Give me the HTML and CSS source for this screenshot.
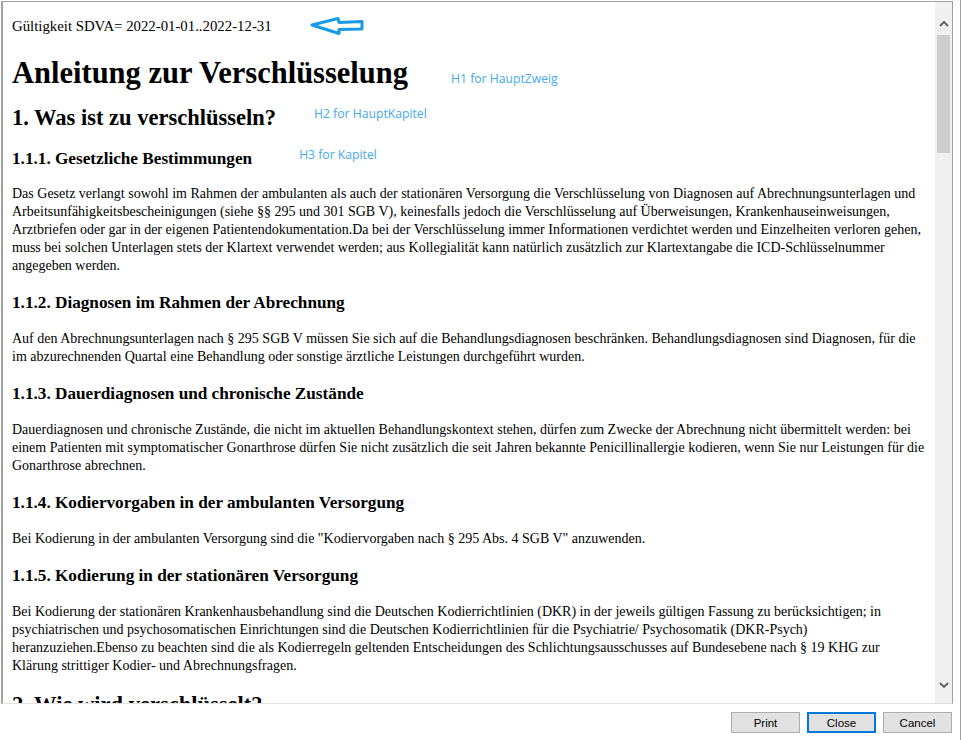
FILE: index.html
```html
<!DOCTYPE html>
<html lang="de">
<head>
<meta charset="utf-8">
<title>Anleitung zur Verschlüsselung</title>
<link rel="stylesheet" href="styles.css">
</head>
<body>
<div class="window">
  <div class="frame">
    <div class="doc">
      <div class="validity">Gültigkeit SDVA= 2022-01-01..2022-12-31<svg class="arrow" width="60" height="20" viewBox="0 0 60 20"><polygon points="3,8 29,1.5 30,5.5 53,4.5 53,12 30,12.5 30,16.5" fill="#fff" stroke="#1a9ae6" stroke-width="3" stroke-linejoin="round"/></svg></div>
      <h1>Anleitung zur Verschlüsselung<span class="note note-h1">H1 for HauptZweig</span></h1>
      <h2>1. Was ist zu verschlüsseln?<span class="note note-h2">H2 for HauptKapitel</span></h2>
      <h3 class="chapter-first">1.1.1. Gesetzliche Bestimmungen<span class="note note-h3">H3 for Kapitel</span></h3>
      <p class="lead">Das Gesetz verlangt sowohl im Rahmen der ambulanten als auch der stationären Versorgung die Verschlüsselung von Diagnosen auf Abrechnungsunterlagen und Arbeitsunfähigkeitsbescheinigungen (siehe §§ 295 und 301 SGB V), keinesfalls jedoch die Verschlüsselung auf Überweisungen, Krankenhauseinweisungen, Arztbriefen oder gar in der eigenen Patientendokumentation.Da bei der Verschlüsselung immer Informationen verdichtet werden und Einzelheiten verloren gehen, muss bei solchen Unterlagen stets der Klartext verwendet werden; aus Kollegialität kann natürlich zusätzlich zur Klartextangabe die ICD-Schlüsselnummer angegeben werden.</p>
      <h3>1.1.2. Diagnosen im Rahmen der Abrechnung</h3>
      <p>Auf den Abrechnungsunterlagen nach § 295 SGB V müssen Sie sich auf die Behandlungsdiagnosen beschränken. Behandlungsdiagnosen sind Diagnosen, für die im abzurechnenden Quartal eine Behandlung oder sonstige ärztliche Leistungen durchgeführt wurden.</p>
      <h3>1.1.3. Dauerdiagnosen und chronische Zustände</h3>
      <p>Dauerdiagnosen und chronische Zustände, die nicht im aktuellen Behandlungskontext stehen, dürfen zum Zwecke der Abrechnung nicht übermittelt werden: bei einem Patienten mit symptomatischer Gonarthrose dürfen Sie nicht zusätzlich die seit Jahren bekannte Penicillinallergie kodieren, wenn Sie nur Leistungen für die Gonarthrose abrechnen.</p>
      <h3>1.1.4. Kodiervorgaben in der ambulanten Versorgung</h3>
      <p>Bei Kodierung in der ambulanten Versorgung sind die "Kodiervorgaben nach § 295 Abs. 4 SGB V" anzuwenden.</p>
      <h3>1.1.5. Kodierung in der stationären Versorgung</h3>
      <p>Bei Kodierung der stationären Krankenhausbehandlung sind die Deutschen Kodierrichtlinien (DKR) in der jeweils gültigen Fassung zu berücksichtigen; in psychiatrischen und psychosomatischen Einrichtungen sind die Deutschen Kodierrichtlinien für die Psychiatrie/ Psychosomatik (DKR-Psych) heranzuziehen.Ebenso zu beachten sind die als Kodierregeln geltenden Entscheidungen des Schlichtungsausschusses auf Bundesebene nach § 19 KHG zur Klärung strittiger Kodier- und Abrechnungsfragen.</p>
      <h2 class="next-chapter">2. Wie wird verschlüsselt?</h2>
    </div>
    <div class="scrollbar">
      <div class="sb-btn"><svg width="10" height="6" viewBox="0 0 10 6"><polyline points="1,5 5,1 9,5" fill="none" stroke="#606060" stroke-width="1.8"/></svg></div>
      <div class="sb-thumb"></div>
      <div class="sb-btn sb-down"><svg width="10" height="6" viewBox="0 0 10 6"><polyline points="1,1 5,5 9,1" fill="none" stroke="#606060" stroke-width="1.8"/></svg></div>
    </div>
  </div>
  <div class="buttons">
    <button class="btn">Print</button>
    <button class="btn btn-default">Close</button>
    <button class="btn">Cancel</button>
  </div>
</div>
</body>
</html>
```

FILE: styles.css
```css
html, body {
  margin: 0;
  padding: 0;
  background: #fff;
}

.window {
  width: 961px;
  height: 740px;
  box-sizing: border-box;
  border-right: 1px solid #a0a0a0;
  display: flex;
  flex-direction: column;
  overflow: hidden;
}

.frame {
  margin: 1px 0 0 1px;
  width: 952px;
  height: 703px;
  box-sizing: border-box;
  border-left: 2px solid #a0a0a0;
  border-top: 1px solid #a0a0a0;
  border-right: 1px solid #a0a0a0;
  border-bottom: 1px solid #e3e3e3;
  display: flex;
  flex-shrink: 0;
}

.doc {
  flex: 1;
  overflow: hidden;
  padding: 15px 8px 0 9px;
  font-family: "Liberation Serif", "Times New Roman", serif;
  color: #000;
  font-size: 14px;
  line-height: 18px;
}

.validity {
  display: flex;
  align-items: center;
  height: 18px;
  font-size: 14.8px;
}

.arrow {
  margin-left: 37px;
  margin-top: 2px;
}

h1 {
  margin: 20px 0 0;
  font-size: 30.5px;
  line-height: 36px;
  font-weight: bold;
}

h2 {
  margin: 13px 0 0;
  font-size: 22.5px;
  line-height: 28px;
  font-weight: bold;
}

h3 {
  margin: 18px 0 0;
  font-size: 17.2px;
  line-height: 20px;
  font-weight: bold;
}

h3.chapter-first {
  margin-top: 17px;
}

p {
  margin: 17px 0 0;
}

p.lead {
  margin-top: 16px;
}

h2.next-chapter {
  margin-top: 16px;
}

.note {
  font-family: "Open Sans", "Noto Sans", sans-serif;
  font-weight: normal;
  font-size: 12.2px;
  line-height: 0;
  color: #45a9ee;
}

.note-h1 { margin-left: 43px; }
.note-h2 { margin-left: 38px; vertical-align: 7px; }
.note-h3 { margin-left: 47px; vertical-align: 5px; }

.scrollbar {
  width: 17px;
  background: #f0f0f0;
  display: flex;
  flex-direction: column;
  padding: 13px 0 10px;
  box-sizing: border-box;
}

.sb-btn {
  height: 17px;
  display: flex;
  align-items: center;
  justify-content: center;
}

.sb-thumb {
  margin: 3px 2px 0;
  height: 118px;
  background: #cdcdcd;
}

.sb-down {
  margin-top: auto;
}

.buttons {
  display: flex;
  justify-content: flex-end;
  gap: 7px;
  padding: 8px 8px 0 0;
}

.btn {
  width: 69px;
  height: 21px;
  box-sizing: border-box;
  background: #e1e1e1;
  border: 1px solid #adadad;
  font-family: "Liberation Sans", Arial, sans-serif;
  font-size: 11.5px;
  color: #000;
  padding: 0;
  margin: 0;
}

.btn-default {
  border: 2px solid #0078d7;
}
```
